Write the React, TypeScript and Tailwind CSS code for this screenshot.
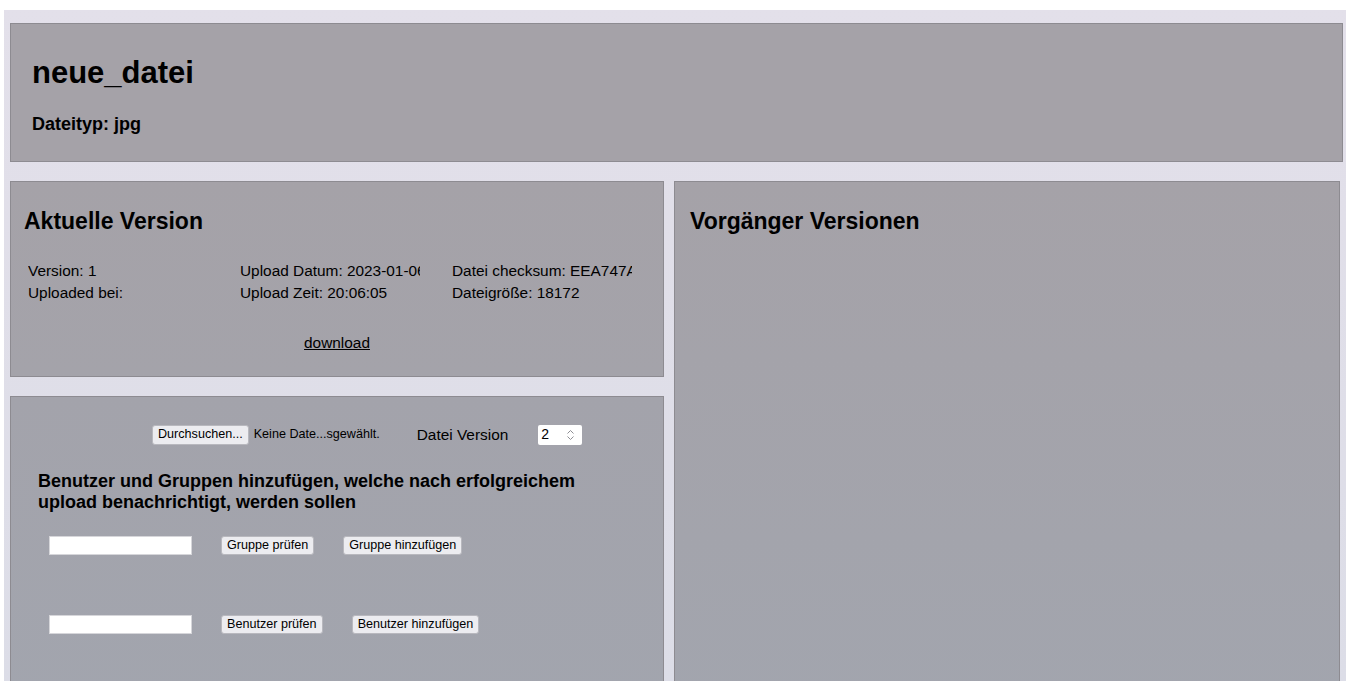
import React from "react";

const btn =
  "h-[19px] px-[5px] rounded-[3px] border border-[#b8b8be] bg-[#ececf0] text-[12.6px] leading-none text-black whitespace-nowrap";

function Spinner() {
  return (
    <svg width="9" height="12" viewBox="0 0 9 12" fill="none" stroke="#8e8e94" strokeWidth="1">
      <path d="M1.5 4.5 L4.5 1.5 L7.5 4.5" />
      <path d="M1.5 7.5 L4.5 10.5 L7.5 7.5" />
    </svg>
  );
}

export default function App() {
  return (
    <div className="min-h-[681px] bg-white font-['Liberation_Sans',Arial,sans-serif] text-black overflow-hidden">
      <div className="ml-[4px] mt-[10px] w-[1342px] h-[680px] bg-gradient-to-b from-[#e3e0ea] to-[#dcdde7] pt-[13px] pl-[6px]">
        {/* file header */}
        <div className="w-[1333px] h-[139px] border border-[#8d8b91] bg-[#a5a2a8] pl-[21px] pt-[31px]">
          <h1 className="text-[31px] font-bold leading-[36px]">neue_datei</h1>
          <h3 className="mt-[23px] text-[18px] font-bold leading-[21px]">Dateityp: jpg</h3>
        </div>

        <div className="mt-[19px] flex gap-[10px]">
          {/* left column */}
          <div className="w-[654px] flex flex-col gap-[19px]">
            <div className="h-[196px] border border-[#8d8b91] bg-gradient-to-b from-[#a5a2a8] to-[#a4a3aa] pl-[13px] pt-[26px]">
              <h2 className="text-[23px] font-bold leading-[27px]">Aktuelle Version</h2>
              <div className="mt-[25px] ml-[4px] grid grid-cols-[180px_180px_180px] gap-x-[32px] text-[15.4px] leading-[22px]">
                <div className="overflow-hidden whitespace-nowrap">Version: 1</div>
                <div className="overflow-hidden whitespace-nowrap">Upload Datum: 2023-01-06</div>
                <div className="overflow-hidden whitespace-nowrap">Datei checksum: EEA747A1</div>
                <div className="overflow-hidden whitespace-nowrap">Uploaded bei:</div>
                <div className="overflow-hidden whitespace-nowrap">Upload Zeit: 20:06:05</div>
                <div className="overflow-hidden whitespace-nowrap">Dateigröße: 18172</div>
              </div>
              <div className="mt-[30px] pr-[13px] text-center text-[15.4px] leading-[18px]">
                <a className="underline text-black cursor-pointer">download</a>
              </div>
            </div>

            <div className="h-[320px] border border-[#8d8b91] bg-gradient-to-b from-[#a3a3ab] to-[#a2a5ae] pt-[26px]">
              <div className="flex items-center pl-[141px]">
                <button className={btn + " h-[20px] px-[3px]"}>Durchsuchen...</button>
                <span className="ml-[5px] text-[12.6px] text-black">Keine Date...sgewählt.</span>
                <span className="ml-[37px] text-[15.4px]">Datei Version</span>
                <div className="ml-[30px] w-[44px] h-[20px] bg-white rounded-[2px] flex items-center justify-between pl-[3px] pr-[7px] text-[14px]">
                  <span>2</span>
                  <Spinner />
                </div>
              </div>
              <h3 className="mt-[25px] ml-[27px] mr-[27px] text-[18px] font-bold leading-[21px]">
                Benutzer und Gruppen hinzufügen, welche nach erfolgreichem upload benachrichtigt, werden sollen
              </h3>
              <div className="mt-[23px] ml-[38px] flex items-center gap-[29px]">
                <input className="w-[143px] h-[19px] bg-white border border-[#d6d6da] outline-none" />
                <button className={btn}>Gruppe prüfen</button>
                <button className={btn}>Gruppe hinzufügen</button>
              </div>
              <div className="mt-[60px] ml-[38px] flex items-center gap-[29px]">
                <input className="w-[143px] h-[19px] bg-white border border-[#d6d6da] outline-none" />
                <button className={btn}>Benutzer prüfen</button>
                <button className={btn}>Benutzer hinzufügen</button>
              </div>
            </div>
          </div>

          {/* right column */}
          <div className="w-[666px] h-[540px] border border-[#8d8b91] bg-gradient-to-b from-[#a5a2a8] to-[#a2a5ae] pl-[15px] pt-[26px]">
            <h2 className="text-[23px] font-bold leading-[27px]">Vorgänger Versionen</h2>
          </div>
        </div>
      </div>
    </div>
  );
}
